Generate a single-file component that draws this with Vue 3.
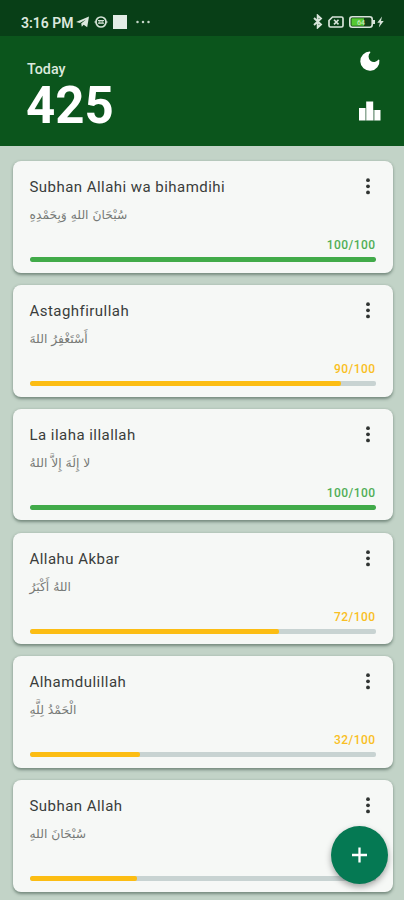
<script setup>
const items = [
  { title: 'Subhan Allahi wa bihamdihi', arabic: 'سُبْحَانَ اللهِ وَبِحَمْدِهِ', count: 100, percent: 100 },
  { title: 'Astaghfirullah', arabic: 'أَسْتَغْفِرُ اللهَ', count: 90, percent: 90 },
  { title: 'La ilaha illallah', arabic: 'لا إِلَهَ إِلاَّ اللهُ', count: 100, percent: 100 },
  { title: 'Allahu Akbar', arabic: 'اللهُ أَكْبَرُ', count: 72, percent: 72 },
  { title: 'Alhamdulillah', arabic: 'الْحَمْدُ لِلَّهِ', count: 32, percent: 32 },
  { title: 'Subhan Allah', arabic: 'سُبْحَانَ اللهِ', count: 31, percent: 31 },
]
</script>

<template>
  <div class="screen">
    <div class="status">
      <div class="status-left">
        <span class="clock">3:16 PM</span>
        <svg class="plane" width="14" height="12" viewBox="0 0 14 12"><path d="M0 6.1 13 .5 11.2 11.2 7.7 8.7 5.8 10.8 5.2 7.5 10 3.4 3.8 6.9z" fill="#dce8de" /></svg>
        <svg class="robot" width="14" height="14" viewBox="0 0 14 14" fill="none" stroke="#d5e2d7"><circle cx="7" cy="7" r="5" stroke-width="1.7" /><path d="M.4 7h2M11.6 7h2M4 5.6h6M4 8.2h6" stroke-width="1.2" /><path d="M5.8 5.8v2.6M8.2 5.8v2.6" stroke-width=".8" /></svg>
        <span class="square"></span>
        <svg class="more" width="14" height="4" viewBox="0 0 14 4" fill="#c5d5c8"><circle cx="1.5" cy="2" r="1.25" /><circle cx="7" cy="2" r="1.25" /><circle cx="12.5" cy="2" r="1.25" /></svg>
      </div>
      <div class="status-right">
        <svg width="10" height="15" viewBox="0 0 10 15" fill="none" stroke="#d8e4da" stroke-width="1.9"><path d="m1 4 7 6.5-3.3 3V1.5L8 4.5 1 11" /></svg>
        <svg class="sim" width="16" height="12" viewBox="0 0 16 12" fill="none" stroke="#d8e4da"><path d="M4.5 1H13.5Q15 1 15 2.5V9.5Q15 11 13.5 11H2.5Q1 11 1 9.5V4.5z" stroke-width="1.7" /><path d="m6 3.8 4.5 4.6m0-4.6L6 8.4" stroke-width="1.6" /></svg>
        <svg class="battery" width="26" height="12" viewBox="0 0 26 12"><rect x=".8" y=".8" width="22.4" height="10.4" rx="2.5" fill="#123f19" stroke="#d8e4da" stroke-width="1.6" /><path d="M24 4h2v4h-2z" fill="#d8e4da" /><path d="M2.5 2.3H15v7.4H2.5z" fill="#55c832" /><text x="8" y="8.7" font-size="7" font-family="Roboto" font-weight="500" fill="#c4e9b8">64</text></svg>
        <svg class="bolt" width="7" height="12" viewBox="0 0 7 12"><path d="M5 .5.3 6.8h2.6L1.8 11.5 6.7 5H4z" fill="#d8e4da" /></svg>
      </div>
    </div>

    <header class="header">
      <div class="summary">
        <div class="label">Today</div>
        <div class="total">425</div>
      </div>
      <div class="actions">
        <svg width="22" height="22" viewBox="0 0 22 22"><path d="M11 1.6A9.6 9.6 0 1 0 20.4 10 L19.6 9.6 A5.5 5.5 0 1 1 11.4 2.4z" fill="#fff" /></svg>
        <svg class="chart" width="22" height="20" viewBox="0 0 22 20"><path d="M0 7h6.2v12.5H0zM15.3 8.9H21.5V19.5h-6.2z" fill="#fff" /><path d="M7.2 .5h7v19h-7z" fill="#fff" /><path d="M6.2 7h1v12.5h-1zM14.2 8.9h1.1V19.5h-1.1z" fill="#a9b8ae" /></svg>
      </div>
    </header>

    <main class="list">
      <article v-for="item in items" :key="item.title" class="card">
        <div class="top">
          <h2 class="title">{{ item.title }}</h2>
          <svg class="kebab" width="6" height="18" viewBox="0 0 6 18" fill="#303432"><circle cx="3" cy="3.2" r="1.9" /><circle cx="3" cy="9.3" r="1.9" /><circle cx="3" cy="15.4" r="1.9" /></svg>
        </div>
        <div class="arabic"><span dir="rtl" lang="ar">{{ item.arabic }}</span></div>
        <div class="count" :class="{ done: item.percent === 100 }">{{ item.count }}/100</div>
        <div class="track"><div class="fill" :class="{ done: item.percent === 100 }" :style="{ width: item.percent + '%' }"></div></div>
      </article>
    </main>

    <button class="fab" aria-label="Add">
      <svg width="16" height="16" viewBox="0 0 16 16"><path d="M7.5 .6v14.8M0 8h15" stroke="#fff" stroke-width="2.3" /></svg>
    </button>
  </div>
</template>

<style>
body { margin: 0; overflow: hidden; }
</style>

<style scoped>
.screen {
  position: relative;
  display: flex;
  flex-direction: column;
  width: 404px;
  height: 900px;
  overflow: hidden;
  background: #c2d3c7;
  font-family: Roboto, sans-serif;
}
.status {
  display: flex;
  justify-content: space-between;
  box-sizing: border-box;
  height: 36px;
  flex: none;
  padding: 8px 20px 0 21px;
  background: #083f17;
}
.status-left, .status-right { display: flex; align-items: center; height: 28px; }
.status-right { height: 27px; }
.clock { width: 52px; padding-top: 1px; font-size: 14px; font-weight: 600; color: #dce8de; white-space: nowrap; }
.plane { margin-left: 3px; }
.robot { margin-left: 4px; }
.square { width: 14px; height: 14px; margin-left: 5px; background: #e2ece5; }
.more { margin-left: 9px; }
.sim { margin-left: 5px; }
.battery { margin-left: 5px; }
.bolt { margin-left: 2px; }
.header {
  display: flex;
  justify-content: space-between;
  box-sizing: border-box;
  height: 110px;
  flex: none;
  padding: 14px 23px 0 27px;
  background: #0b551c;
  color: #fff;
}
.label { margin-top: 10px; font-size: 14.3px; line-height: 18px; font-weight: 500; color: #dbe9dd; }
.total { margin-top: 3px; margin-left: -1px; font-size: 51px; line-height: 50px; font-weight: 700; }
.actions { display: flex; flex-direction: column; align-items: center; }
.chart { margin-top: 29px; }
.list {
  display: flex;
  flex-direction: column;
  gap: 12.3px;
  padding: 15.3px 11.5px 0 13px;
}
.card {
  box-sizing: border-box;
  height: 111.5px;
  flex: none;
  padding: 16px 17px 0 16.5px;
  border-radius: 8px;
  background: #f6f8f6;
  box-shadow: 0 1.5px 3px rgba(42, 65, 53, .5);
}
.top { display: flex; justify-content: space-between; height: 20px; }
.title { margin: 0; font-size: 15px; line-height: 20px; font-weight: 400; letter-spacing: .46px; color: #3a3d3b; white-space: nowrap; }
.kebab { margin-right: 5px; }
.arabic { display: flex; height: 20px; margin-top: 8px; font-family: "DejaVu Sans", sans-serif; font-size: 12.3px; line-height: 20px; color: #767a77; white-space: nowrap; }
.count { margin-top: 12px; font-size: 12px; line-height: 16px; font-weight: 500; letter-spacing: .45px; text-align: right; color: #f9bf24; }
.count.done { color: #50ae57; }
.track { height: 5px; margin-top: 4px; border-radius: 2px; background: #c8d3d2; overflow: hidden; }
.fill { height: 100%; border-radius: 2px; background: #fcbd13; }
.fill.done { background: #41ab49; }
.fab {
  position: absolute;
  left: 331px;
  top: 826px;
  display: flex;
  align-items: center;
  justify-content: center;
  width: 57px;
  height: 58px;
  padding: 0;
  border: 0;
  border-radius: 50%;
  background: #057953;
  box-shadow: 0 3px 6px rgba(0, 0, 0, .35);
}
</style>
